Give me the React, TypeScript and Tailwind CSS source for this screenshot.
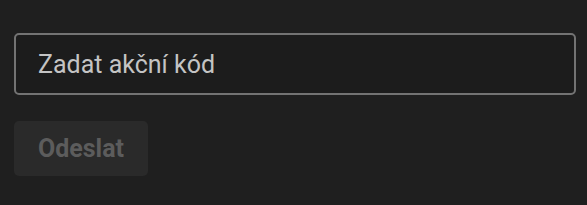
import { useState } from "react";

export default function App() {
  const [code, setCode] = useState("");

  return (
    <div className="min-h-[205px] w-full bg-[#1f1f1f] px-[14px] pt-[33px] font-['Roboto',sans-serif]">
      <input
        value={code}
        onChange={(e) => setCode(e.target.value)}
        placeholder="Zadat akční kód"
        className="block h-[62px] w-[562px] rounded-[5px] border-2 border-[#737373] bg-[#1c1c1c] px-[22px] text-[25px] text-[#d0d0d0] outline-none placeholder:text-[#c4c4c4]"
      />
      <button
        disabled
        className="mt-[26px] h-[55px] w-[134px] rounded-[5px] bg-[#2a2a2a] text-[25px] font-bold text-[#5c5c5c]"
      >
        Odeslat
      </button>
    </div>
  );
}
